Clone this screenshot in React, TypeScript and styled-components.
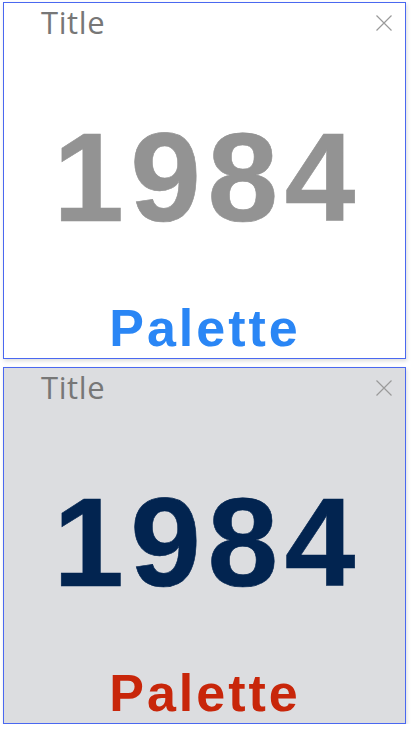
import React from "react";
import styled, { createGlobalStyle } from "styled-components";

const Global = createGlobalStyle`
  html, body { margin: 0; padding: 0; background: #ffffff; }
  body { font-family: "Liberation Sans", Arial, sans-serif; }
`;

const Page = styled.div`
  display: flex;
  flex-direction: column;
  gap: 8px;
  padding: 2px 0 0 3px;
`;

const Card = styled.section<{ $tone: "light" | "grey" }>`
  box-sizing: border-box;
  width: 403px;
  height: 357px;
  border: 1px solid #4a68f0;
  background: ${(p) => (p.$tone === "light" ? "#ffffff" : "#dcdde0")};
  box-shadow: 1px 2px 4px rgba(0, 0, 0, 0.14);
  display: grid;
  grid-template-rows: 111px 127px 1fr auto;
`;

const Header = styled.header`
  display: flex;
  justify-content: space-between;
  align-items: flex-start;
  padding: 4px 13px 0 37px;
`;

const Title = styled.h2`
  margin: 0;
  font-family: "Open Sans", sans-serif;
  font-weight: 400;
  font-size: 31px;
  line-height: 1;
  letter-spacing: 0.6px;
  color: #777777;
`;

const Close = styled.button`
  margin-top: 8px;
  padding: 0;
  border: 0;
  background: transparent;
  width: 16px;
  height: 16px;
  display: flex;
  cursor: pointer;
`;

const Year = styled.div<{ $color: string }>`
  font-family: "Liberation Sans", Arial, sans-serif;
  font-weight: 700;
  font-size: 127px;
  line-height: 1;
  letter-spacing: 6.5px;
  text-align: center;
  padding-left: 6px;
  color: ${(p) => p.$color};
  -webkit-text-stroke: 0.6px ${(p) => p.$color};
`;

const Palette = styled.div<{ $color: string }>`
  grid-row: 4;
  font-family: "Liberation Sans", Arial, sans-serif;
  font-weight: 700;
  font-size: 52px;
  line-height: 1;
  letter-spacing: 3px;
  text-align: center;
  padding: 0 0 4px 1px;
  color: ${(p) => p.$color};
`;

const CloseIcon = () => (
  <svg width="16" height="16" viewBox="0 0 16 16" fill="none">
    <path d="M0.5 0.5 L15.5 15.5 M15.5 0.5 L0.5 15.5" stroke="#9a9a9a" strokeWidth="1.2" />
  </svg>
);

const Tile = ({ tone, year, palette }: { tone: "light" | "grey"; year: string; palette: string }) => (
  <Card $tone={tone}>
    <Header>
      <Title>Title</Title>
      <Close aria-label="close">
        <CloseIcon />
      </Close>
    </Header>
    <Year $color={year}>1984</Year>
    <Palette $color={palette}>Palette</Palette>
  </Card>
);

export default function App() {
  return (
    <>
      <Global />
      <Page>
        <Tile tone="light" year="#939393" palette="#2a86f5" />
        <Tile tone="grey" year="#022450" palette="#c8260a" />
      </Page>
    </>
  );
}
